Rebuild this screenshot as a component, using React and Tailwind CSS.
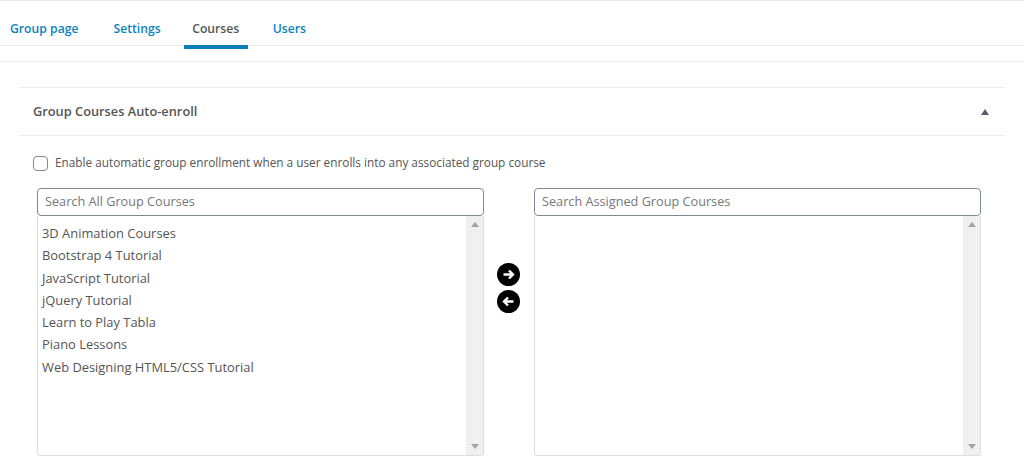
import React from 'react';

const courses = [
  '3D Animation Courses',
  'Bootstrap 4 Tutorial',
  'JavaScript Tutorial',
  'jQuery Tutorial',
  'Learn to Play Tabla',
  'Piano Lessons',
  'Web Designing HTML5/CSS Tutorial',
];

const tabs = [
  { label: 'Group page', className: 'mr-[35px] ml-[10px] text-[#0a82bd]' },
  { label: 'Settings', className: 'mr-[23px] text-[#0a82bd]' },
  { label: 'Courses', active: true, className: 'mr-[25px] px-[8.5px] text-[#555555]' },
  { label: 'Users', className: 'text-[#0a82bd]' },
];

const Arrow = ({ dir }) => (
  <div className="w-[23px] h-[23px] rounded-full bg-black flex items-center justify-center">
    <svg width="13" height="13" viewBox="0 0 13 13" fill="none" stroke="white" strokeWidth="2.4" className={dir === 'left' ? 'rotate-180' : ''}>
      <path d="M1.5 6.5H11M7 2.5l4 4-4 4" />
    </svg>
  </div>
);

const ListBox = ({ placeholder, items }) => (
  <div className="w-[447px] flex flex-col">
    <div className="h-[28px] border border-[#7e8993] rounded-[4px] px-[7px] flex items-center text-[12.7px] text-[#777777] bg-white">
      {placeholder}
    </div>
    <div className="h-[240px] flex border border-t-0 border-[#dddddd] rounded-b-[3px]">
      <ul className="flex-1 pt-[6px] pl-[4px] text-[12.9px] text-[#555555]">
        {items.map((item) => (
          <li key={item} className="h-[22.3px] leading-[22px]">{item}</li>
        ))}
      </ul>
      <div className="w-[17px] bg-[#f0f0f0] flex flex-col justify-between items-center py-[6px]">
        <div className="w-0 h-0 border-x-[4px] border-x-transparent border-b-[5px] border-b-[#a3a3a3]" />
        <div className="w-0 h-0 border-x-[4px] border-x-transparent border-t-[5px] border-t-[#a3a3a3]" />
      </div>
    </div>
  </div>
);

export default function App() {
  return (
    <div className="w-[1024px] h-[462px] overflow-hidden bg-white font-['Open_Sans',sans-serif] border-t border-[#e5e5e5]">
      <nav className="h-[45px] border-b border-[#e8e8e8] flex items-stretch text-[12.2px] font-semibold">
        {tabs.map((tab) => (
          <div key={tab.label} className={`relative flex items-center pt-[19px] pb-[6px] ${tab.className}`}>
            {tab.label}
            {tab.active && <span className="absolute left-0 right-0 top-[44px] h-[4px] bg-[#0a7fbc]" />}
          </div>
        ))}
      </nav>
      <div className="mt-[15px] border-t border-[#ececec] pt-[25px] pl-[19px] pr-[19px]">
        <section>
          <header className="h-[49px] border-y border-[#ececec] flex items-center justify-between pl-[14px] pr-[16px]">
            <h2 className="pt-[1px] text-[12.8px] font-semibold text-[#555555]">Group Courses Auto-enroll</h2>
            <div className="w-0 h-0 border-x-[4px] border-x-transparent border-b-[6px] border-b-[#555d66]" />
          </header>
          <label className="mt-[20px] ml-[14px] flex items-center gap-[7px] text-[11.8px] leading-[17px] text-[#555555]">
            <span className="w-[15px] h-[15px] border border-[#7e8993] rounded-[4px] bg-white" />
            <span className="-mt-[2px]">Enable automatic group enrollment when a user enrolls into any associated group course</span>
          </label>
          <div className="mt-[17px] ml-[18px] flex items-start">
            <ListBox placeholder="Search All Group Courses" items={courses} />
            <div className="w-[50px] pr-[2px] pt-[75px] flex flex-col items-center gap-[4px]">
              <Arrow dir="right" />
              <Arrow dir="left" />
            </div>
            <ListBox placeholder="Search Assigned Group Courses" items={[]} />
          </div>
        </section>
      </div>
    </div>
  );
}
